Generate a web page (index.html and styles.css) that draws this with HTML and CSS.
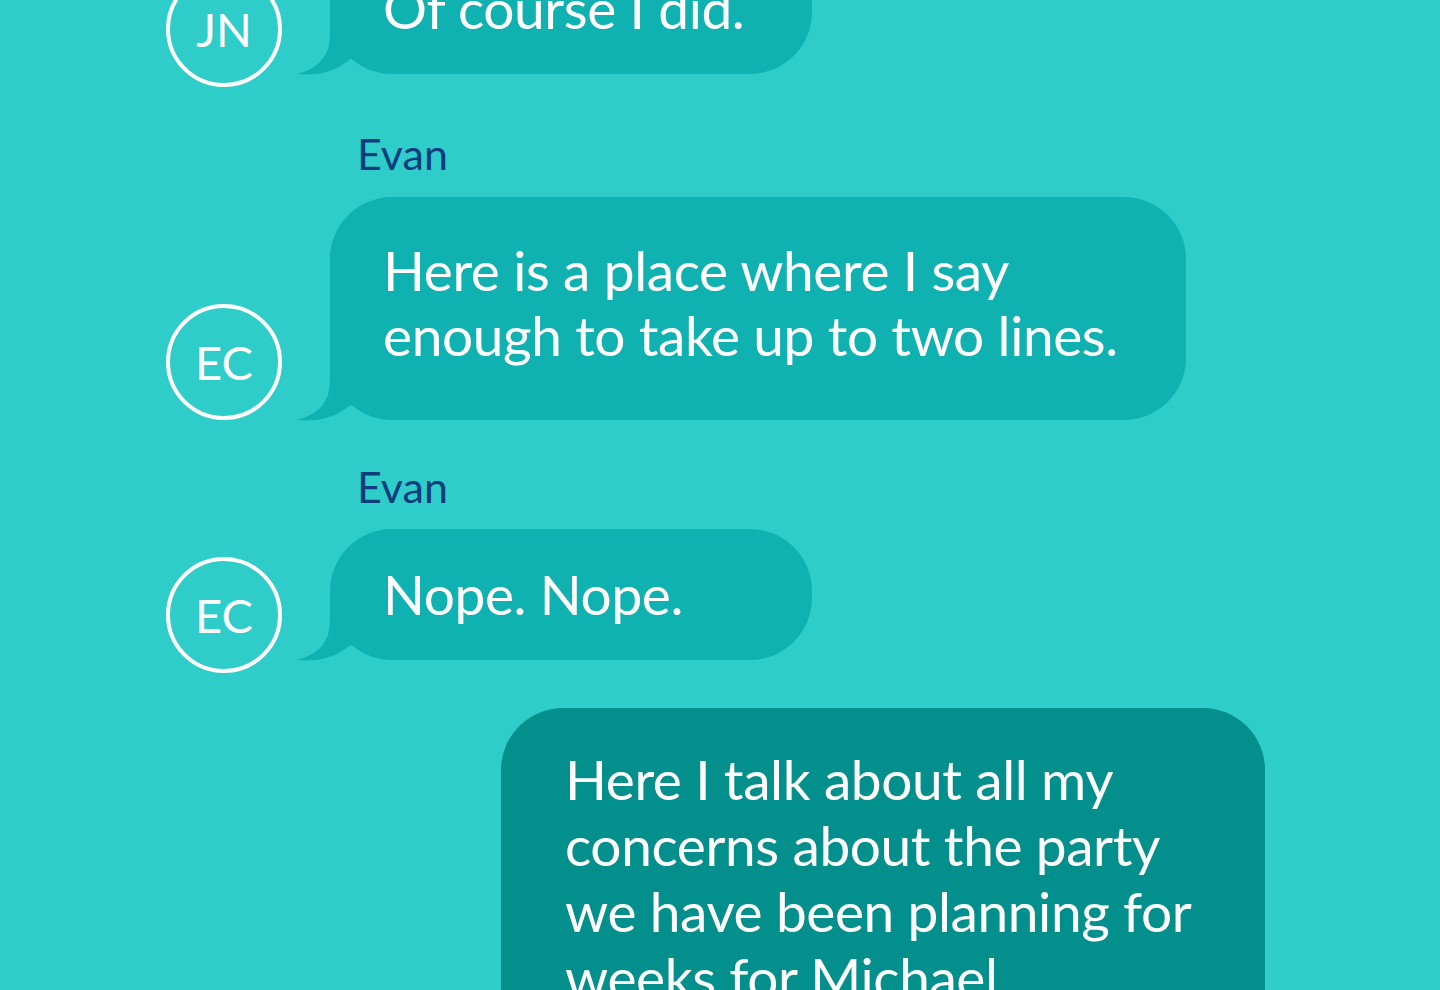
FILE: index.html
```html
<!DOCTYPE html>
<html lang="en">
<head>
<meta charset="utf-8">
<title>Chat</title>
<link rel="stylesheet" href="styles.css">
</head>
<body>
<main class="thread">
  <div class="msg msg--in">
    <div class="avatar">JN</div>
    <div class="bubble bubble--in bubble--short">Of course I did.
      <svg class="tail" viewBox="0 0 60 70" width="60" height="70" aria-hidden="true"><path d="M33 0 L33 28 C33 50 22 62 0 68 C20 70 38 66 52 54 L60 50 L60 0 Z"/></svg>
    </div>
  </div>

  <div class="sender">Evan</div>
  <div class="msg msg--in msg--tall">
    <div class="avatar">EC</div>
    <div class="bubble bubble--in bubble--wide">Here is a place where I say<br>enough to take up to two lines.
      <svg class="tail" viewBox="0 0 60 70" width="60" height="70" aria-hidden="true"><path d="M33 0 L33 28 C33 50 22 62 0 68 C20 70 38 66 52 54 L60 50 L60 0 Z"/></svg>
    </div>
  </div>

  <div class="sender">Evan</div>
  <div class="msg msg--in">
    <div class="avatar">EC</div>
    <div class="bubble bubble--in bubble--short">Nope. Nope.
      <svg class="tail" viewBox="0 0 60 70" width="60" height="70" aria-hidden="true"><path d="M33 0 L33 28 C33 50 22 62 0 68 C20 70 38 66 52 54 L60 50 L60 0 Z"/></svg>
    </div>
  </div>

  <div class="msg msg--out">
    <div class="bubble bubble--out">Here I talk about all my<br>concerns about the party<br>we have been planning for<br>weeks for Michael.</div>
  </div>
</main>
</body>
</html>
```

FILE: styles.css
```css
html, body {
  margin: 0;
  padding: 0;
}

body {
  background: #2ecdca;
  width: 1440px;
  height: 990px;
  overflow: hidden;
  font-family: "Lato", "Liberation Sans", sans-serif;
  color: #ffffff;
}

.thread {
  display: flex;
  flex-direction: column;
  margin-top: -57px;
  padding: 0 175px 0 166px;
}

.msg {
  display: flex;
  align-items: flex-end;
}

.msg--in {
  gap: 48px;
}

.msg--out {
  justify-content: flex-end;
  margin-top: 35px;
}

.avatar {
  flex: none;
  width: 116px;
  height: 116px;
  box-sizing: border-box;
  border: 4px solid #ffffff;
  border-radius: 50%;
  display: flex;
  align-items: center;
  justify-content: center;
  font-size: 47px;
  color: #ffffff;
}

.bubble {
  position: relative;
  box-sizing: border-box;
  font-size: 55px;
  letter-spacing: -0.4px;
  line-height: 65px;
  border-radius: 62px;
  white-space: nowrap;
}

.bubble--in {
  background: #10b1b1;
  padding-left: 53px;
}

.bubble--short {
  width: 482px;
  padding-top: 33px;
  padding-bottom: 33px;
  margin-bottom: 13px;
}

.bubble--wide {
  width: 856px;
  padding-top: 41px;
  padding-bottom: 52px;
}

.bubble--out {
  background: #038f8b;
  width: 764px;
  padding: 38px 40px 60px 64px;
  line-height: 66px;
}

.tail {
  position: absolute;
  left: -33px;
  bottom: -2px;
  fill: #10b1b1;
}

.sender {
  margin: 41px 0 17px 191px;
  font-size: 43px;
  line-height: 1.2;
  color: #0c3d7d;
}
```
